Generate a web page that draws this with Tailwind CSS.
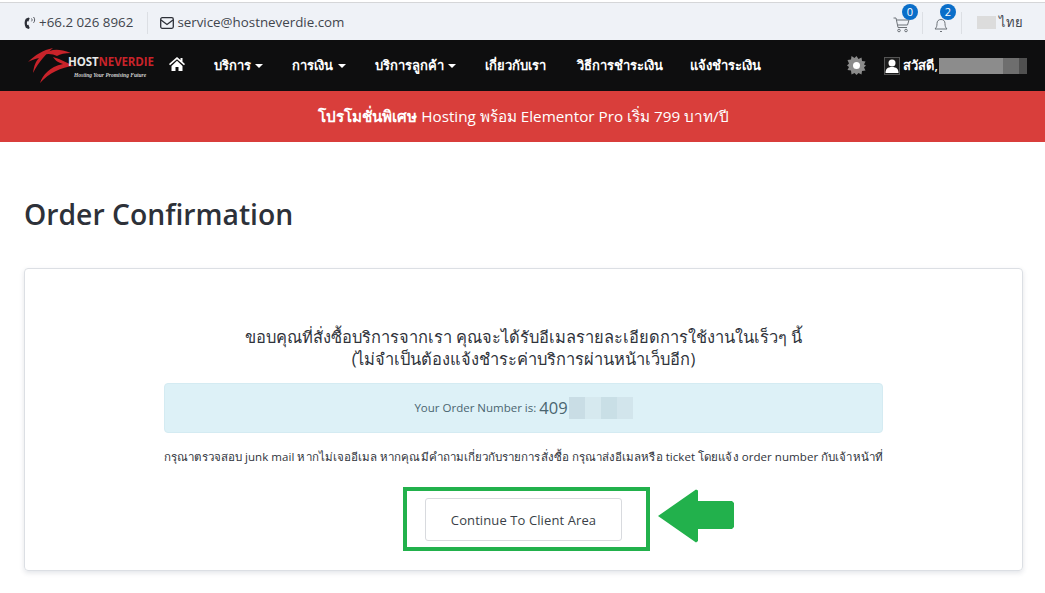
<!DOCTYPE html>
<html lang="th">
<head>
<meta charset="utf-8">
<script src="https://cdn.jsdelivr.net/npm/@tailwindcss/browser@4"></script>
</head>
<body class="bg-white font-['Open_Sans','Noto_Sans','DejaVu_Sans',sans-serif] text-[#2f333b] overflow-hidden">
<div class="w-[1045px] h-[593px] overflow-hidden">
  <!-- top bar -->
  <div class="h-[40px] mt-[2px] -mb-[2px] border-t border-[#d5d6d8] bg-[#eff2f7] flex items-center pl-[24px] pr-[22px] text-[13.350px] text-[#3f454d]">
    <svg class="w-[12px] h-[14px] mr-[3px] shrink-0" viewBox="0 0 12 14"><path fill="#2d3038" d="M4.500 1.500 1.800 2.800C.2 5.500.2 8.500 1.800 11.800L4.500 13l1.200-1-1.300-3.300-1.300.2c-.3-1.200-.3-2.300 0-3.600l1.300.2 1.300-3.300z"/><path d="M7.500 2.500c.8.800.8 2 0 2.800M9.500 1c1.500 1.500 1.500 4.300 0 5.800" fill="none" stroke="#2d3038" stroke-width=".8"/></svg>
    <span>+66.2 026 8962</span>
    <div class="w-px h-[22px] bg-[#dcdfe4] ml-[14px] mr-[12px]"></div>
    <svg class="w-[14px] h-[12px] mr-[3px] shrink-0" viewBox="0 0 14 12" fill="none" stroke="#2d3038" stroke-width="1.300"><rect x=".7" y=".7" width="12.600" height="10.600" rx="1.500"/><path d="M1 3l6 4.500L13 3"/></svg>
    <span>service@hostneverdie.com</span>
    <div class="ml-auto flex items-center h-[24px]">
      <div class="relative w-[24px] h-[20px] ml-[5px] mr-[4px]">
        <svg class="absolute -left-px top-[4px] w-[17px] h-[16px]" viewBox="0 0 17 16" fill="none" stroke="#6d7278" stroke-width="1"><path d="M.5 1h2.500l2 9.500h9M3.500 3H16l-1.500 5H4.500"/><circle cx="6" cy="13.500" r="1.300"/><circle cx="13" cy="13.500" r="1.300"/></svg>
        <span class="absolute left-[8px] -top-[9px] w-[16px] h-[16px] rounded-full bg-[#0a6ec9] text-white text-[11px] leading-[16px] text-center">0</span>
      </div>
      <div class="w-px h-[22px] bg-[#dcdfe4]"></div>
      <div class="relative w-[30px] h-[20px] mr-[8px]">
        <svg class="absolute left-[11px] top-[3px] w-[14px] h-[17px]" viewBox="0 0 14 17" fill="none" stroke="#6d7278" stroke-width="1"><path d="M1 13c1.500-1.500 2-3 2-5.500C3 5 4.500 3.500 7 3.500S11 5 11 7.500c0 2.500.5 4 2 5.500zM6 15.500h2"/></svg>
        <span class="absolute left-[17px] -top-[9px] w-[16px] h-[16px] rounded-full bg-[#0a6ec9] text-white text-[11px] leading-[16px] text-center">2</span>
      </div>
      <div class="w-px h-[22px] bg-[#dcdfe4]"></div>
      <div class="w-[19px] h-[13px] bg-[#dcdcdc] ml-[15px] mr-[3px]"></div>
      <span class="text-[13px]">ไทย</span>
    </div>
  </div>
  <!-- nav -->
  <nav class="h-[51px] bg-[#0e0e0f] flex items-center pr-[18px] text-white text-[13px] font-semibold">
    <div class="relative w-[169px] h-[51px] shrink-0">
      <svg class="absolute left-[27px] top-[7px] w-[48px] h-[37px]" viewBox="0 0 48 37" fill="#c8232a">
        <path d="M1 15C8 8 16 3 26 1 20 6 12 14 6 26 7 18 9 14 12 11 8 12 4 13 1 15Z"/>
        <path d="M16 8C24 2 30 1 44 6 38 6 33 7 30 9 26 7 21 6 16 8Z"/>
        <path d="M26 10 32 12 47 19C34 20 22 26 13 36 16 28 22 20 36 17 30 15 28 13 26 10Z"/>
      </svg>
      <div class="absolute left-[68px] top-[15px] text-[11.500px] leading-[14px] font-bold tracking-[-0.1px] whitespace-nowrap"><span class="text-[#e8e8e8]">HOST</span><span class="text-[#c8232a]">NEVERDIE</span></div>
      <div class="absolute left-[74px] top-[31px] text-[5.500px] leading-[8px] text-[#cfcfcf] font-['Liberation_Serif',serif] italic font-bold whitespace-nowrap">Hosting Your Promising Future</div>
    </div>
    <svg class="w-[16px] h-[14px] mb-[3px] shrink-0" viewBox="0 0 16 14" fill="#fff"><path d="M8 0 0 7l1 1.200L8 2.200l7 6L16 7l-2.500-2.200V1h-2v2zM2.500 9v5h4V10h3v4h4V9L8 3.800z"/></svg>
    <div class="flex items-center ml-[29px] gap-[29px] whitespace-nowrap">
      <span class="flex items-center gap-[4px]">บริการ <i class="w-0 h-0 border-x-[4px] border-x-transparent border-t-[4px] border-t-white"></i></span>
      <span class="flex items-center gap-[5px]">การเงิน <i class="w-0 h-0 border-x-[4px] border-x-transparent border-t-[4px] border-t-white"></i></span>
      <span class="flex items-center gap-[4px]">บริการลูกค้า <i class="w-0 h-0 border-x-[4px] border-x-transparent border-t-[4px] border-t-white"></i></span>
      <span class="mr-[2px]">เกี่ยวกับเรา</span>
      <span>วิธีการชำระเงิน</span>
      <span class="-ml-[2px]">แจ้งชำระเงิน</span>
    </div>
    <div class="ml-auto flex items-center">
      <svg class="w-[19px] h-[19px] mr-[18px]" viewBox="0 0 19 19"><path fill="#8b8b8b" d="M9.500 0l2 3 3-1.500.5 3.500 3.500.5L17 8.500l2 1-2 2 1.500 3-3.500.5-.5 3.500-3-1.500-2 2-2-2-3 1.500L4 14.500.5 14 2 11 0 9.500l2-2L.5 4 4 3.500 4.500 0l3 2z"/><circle cx="9.500" cy="9.500" r="3.500" fill="#fff"/></svg>
      <svg class="w-[16px] h-[18px] mr-[3px]" viewBox="0 0 16 18"><rect x=".5" y=".5" width="15" height="17" fill="#1c1c1c" stroke="#555"/><circle cx="8" cy="6" r="3.500" fill="#fff"/><path d="M1.500 16c0-4 2-6 6.500-6s6.500 2 6.500 6z" fill="#fff"/></svg>
      <span>สวัสดี,</span>
      <div class="flex h-[16px] ml-px">
        <div class="w-[64px] bg-[#8c8c8c]"></div>
        <div class="w-[16px] bg-[#6e6e6e]"></div>
        <div class="w-[8px] bg-[#505050]"></div>
      </div>
    </div>
  </nav>
  <!-- banner -->
  <div class="h-[51px] bg-[#d93e3b] flex items-center justify-center text-white text-[15.250px] pb-px">
    <span class="pl-[2px]"><b class="font-semibold">โปรโมชั่นพิเศษ</b> Hosting พร้อม Elementor Pro เริ่ม 799 บาท/ปี</span>
  </div>
  <!-- content -->
  <main class="px-[24px] pr-[22px]">
    <h1 class="text-[28.300px] leading-[40px] font-semibold text-[#2d3139] mt-[52px]">Order Confirmation</h1>
    <section class="mt-[34px] h-[303px] border border-[#dcdfe4] rounded-[4px] shadow-[0_2px_5px_rgba(60,70,100,0.14)] pt-[57px] flex flex-col items-center">
      <p class="text-[16.450px] leading-[22px] text-center text-[#2f333b]">ขอบคุณที่สั่งซื้อบริการจากเรา คุณจะได้รับอีเมลรายละเอียดการใช้งานในเร็วๆ นี้<br>(ไม่จำเป็นต้องแจ้งชำระค่าบริการผ่านหน้าเว็บอีก)</p>
      <div class="w-[719px] h-[50px] mt-[13px] bg-[#ddf1f7] border border-[#d4ebf2] rounded-[4px] flex items-center justify-center text-[#4a6570] text-[11.500px]">
        <span>Your Order Number is:</span>
        <span class="text-[16.500px] ml-[3px] mr-px">409</span>
        <div class="flex h-[22px]">
          <div class="w-[16px] bg-[#c9dde5]"></div>
          <div class="w-[16px] bg-[#d6e9ef]"></div>
          <div class="w-[16px] bg-[#c9dfe6]"></div>
          <div class="w-[16px] bg-[#d2e5ec]"></div>
        </div>
      </div>
      <p class="text-[11.520px] tracking-[0.06px] leading-[16px] mt-[16px] whitespace-nowrap text-[#2f333b]">กรุณาตรวจสอบ junk mail หากไม่เจออีเมล หากคุณมีคำถามเกี่ยวกับรายการสั่งซื้อ กรุณาส่งอีเมลหรือ ticket โดยแจ้ง order number กับเจ้าหน้าที่</p>
      <div class="flex mt-[22px] ml-[6px] items-start relative w-[247px] h-[64px] border-[4px] border-[#22b14c]">
        <button class="ml-[18px] mt-[7px] w-[197px] h-[43px] pt-[2px] bg-white border border-[#d8dade] rounded-[3px] text-[13px] tracking-[0.1px] text-[#3a3f48]">Continue To Client Area</button>
        <svg class="absolute left-[251px] top-[-2px] w-[76px] h-[54px]" viewBox="0 0 76 54" fill="#22b14c"><path d="M0 27 38 0.500 40 1.500 40 12 74 12 76 14 76 38 74 40 40 40 40 52 38 53.500z"/></svg>
      </div>
    </section>
  </main>
</div>
</body>
</html>
